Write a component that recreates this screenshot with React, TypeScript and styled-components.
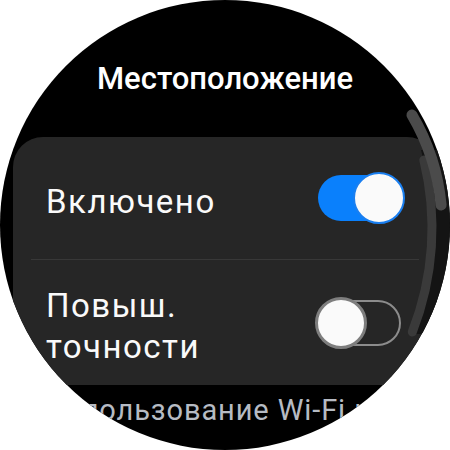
import React from "react";
import styled, { createGlobalStyle } from "styled-components";

const Global = createGlobalStyle`
  html, body { margin: 0; padding: 0; background: #ffffff; }
  body { font-family: Roboto, "Noto Sans", sans-serif; }
`;

const Screen = styled.div`
  position: relative;
  width: 450px;
  height: 450px;
  border-radius: 50%;
  overflow: hidden;
  background: #000000;
  display: flex;
  flex-direction: column;
  padding-top: 61px;
  box-sizing: border-box;
`;

const Title = styled.h1`
  margin: 0;
  font-family: Roboto, sans-serif;
  font-weight: 500;
  font-size: 31px;
  line-height: 36px;
  color: #ffffff;
  text-align: center;
`;

const Card = styled.section`
  margin: 40px 13px 0;
  background: #262626;
  border-radius: 30px;
`;

const Row = styled.div<{ $height: number }>`
  display: flex;
  align-items: center;
  justify-content: space-between;
  min-height: ${(p) => p.$height}px;
  padding: 0 32px 0 33px;
`;

const Label = styled.div`
  max-width: 240px;
  padding-top: 6px;
  font-family: Roboto, sans-serif;
  font-weight: 400;
  font-size: 33px;
  line-height: 41px;
  letter-spacing: 1.5px;
  color: #fafafa;
`;

const Divider = styled.hr`
  margin: 0 18px;
  border: 0;
  height: 1px;
  background: #383838;
`;

const SwitchBox = styled.div`
  position: relative;
  width: 90px;
  height: 52px;
  flex: none;
`;

const Track = styled.div<{ $on: boolean }>`
  position: absolute;
  left: 3px;
  right: 4px;
  top: 3px;
  height: 46px;
  box-sizing: border-box;
  border-radius: 23px;
  background: ${(p) => (p.$on ? "#0a80fc" : "transparent")};
  border: ${(p) => (p.$on ? "none" : "2px solid #8c8c8c")};
`;

const Knob = styled.div<{ $on: boolean }>`
  position: absolute;
  top: 0;
  ${(p) => (p.$on ? "right: 0;" : "left: 0;")}
  width: 52px;
  height: 52px;
  box-sizing: border-box;
  border-radius: 50%;
  background: #fafafa;
  border: ${(p) => (p.$on ? "2px solid #1a7ff0" : "3px solid #7e7e7e")};
`;

const Footer = styled.p`
  margin: 7px 0 0;
  padding-left: 44px;
  font-family: Roboto, sans-serif;
  font-weight: 400;
  font-size: 29px;
  line-height: 36px;
  letter-spacing: 0.9px;
  color: #b6bbc3;
  white-space: nowrap;
`;

const ScrollOverlay = styled.svg`
  position: absolute;
  inset: 0;
  pointer-events: none;
`;

function Switch({ on }: { on: boolean }) {
  return (
    <SwitchBox role="switch" aria-checked={on}>
      <Track $on={on} />
      <Knob $on={on} />
    </SwitchBox>
  );
}

function ScrollIndicator() {
  return (
    <ScrollOverlay width="450" height="450" viewBox="0 0 450 450">
      {/* shaded gutter between the track and the bezel */}
      <path d="M 421 150 A 285 285 0 0 1 411.6 334 L 460 334 L 460 150 Z" fill="#141414" />
      {/* track */}
      <path
        d="M 423.8 160 A 285 285 0 0 1 412.3 332"
        fill="none"
        stroke="#3a3a3a"
        strokeWidth="9"
        strokeLinecap="round"
      />
      {/* thumb */}
      <path
        d="M 412 115 A 217 217 0 0 1 441.1 205"
        fill="none"
        stroke="#4b4b4b"
        strokeWidth="11"
        strokeLinecap="round"
      />
    </ScrollOverlay>
  );
}

export default function App() {
  return (
    <>
      <Global />
      <Screen>
        <Title>Местоположение</Title>
        <Card>
          <Row $height={122}>
            <Label>Включено</Label>
            <Switch on />
          </Row>
          <Divider />
          <Row $height={125}>
            <Label>Повыш. точности</Label>
            <Switch on={false} />
          </Row>
        </Card>
        <Footer>Использование Wi-Fi и Bluetooth для повышения точности</Footer>
        <ScrollIndicator />
      </Screen>
    </>
  );
}
